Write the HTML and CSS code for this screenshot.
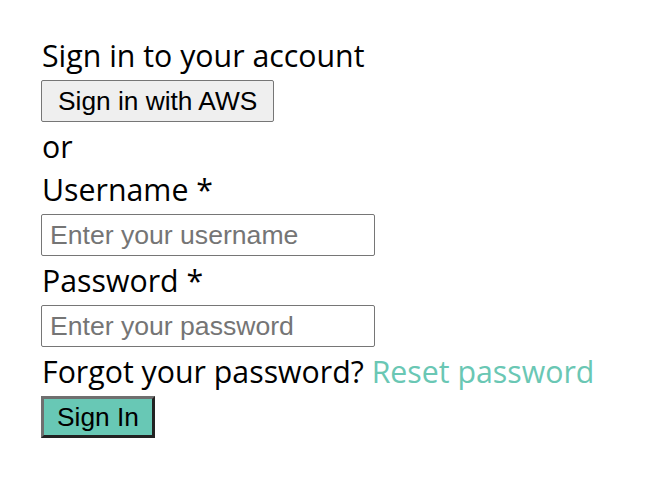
FILE: index.html
```html
<!DOCTYPE html>
<html>
<head>
<meta charset="utf-8">
<link rel="stylesheet" href="styles.css">
</head>
<body>
<form class="signin">
  <div class="line">Sign in to your account</div>
  <div class="ctl"><button type="button" class="btn-aws">Sign in with AWS</button></div>
  <div class="line">or</div>
  <label class="line" for="u">Username *</label>
  <div class="ctl"><input id="u" class="field" type="text" placeholder="Enter your username"></div>
  <label class="line" for="p">Password *</label>
  <div class="ctl"><input id="p" class="field" type="password" placeholder="Enter your password"></div>
  <div class="line">Forgot your password? <a class="link" href="#">Reset password</a></div>
  <div class="ctl"><button type="button" class="btn-signin">Sign In</button></div>
</form>
</body>
</html>
```
FILE: styles.css
```css
html, body {
  margin: 0;
  background: #ffffff;
}
.signin {
  display: flex;
  flex-direction: column;
  align-items: flex-start;
  padding: 34px 0 0 42px;
  font-family: "Open Sans", "Noto Sans", sans-serif;
  font-size: 30.3px;
  color: #000;
}
.line {
  display: block;
  line-height: 43px;
  height: 43px;
  white-space: nowrap;
}
.ctl {
  margin: 3px 0 3px -1px;
  display: flex;
}
.btn-aws {
  font-family: "Liberation Sans", Arial, sans-serif;
  font-size: 26.3px;
  height: 42px;
  padding: 0 16px;
  background: #efefef;
  border: 1px solid #767676;
  border-radius: 2px;
  color: #000;
}
.field {
  box-sizing: border-box;
  width: 334px;
  height: 42px;
  padding: 0 8px;
  border: 1px solid #767676;
  border-radius: 2px;
  font-family: "Liberation Sans", Arial, sans-serif;
  font-size: 26.6px;
  color: #000;
}
.field::placeholder {
  color: #757575;
}
.link {
  color: #6ac7b4;
  text-decoration: none;
}
.btn-signin {
  font-family: "Liberation Sans", Arial, sans-serif;
  font-size: 26.3px;
  height: 42px;
  padding: 0 13px;
  background: #68c8b5;
  color: #000;
  border-style: solid;
  border-width: 3px;
  border-color: #6f6f6f #222 #222 #6f6f6f;
}
```
